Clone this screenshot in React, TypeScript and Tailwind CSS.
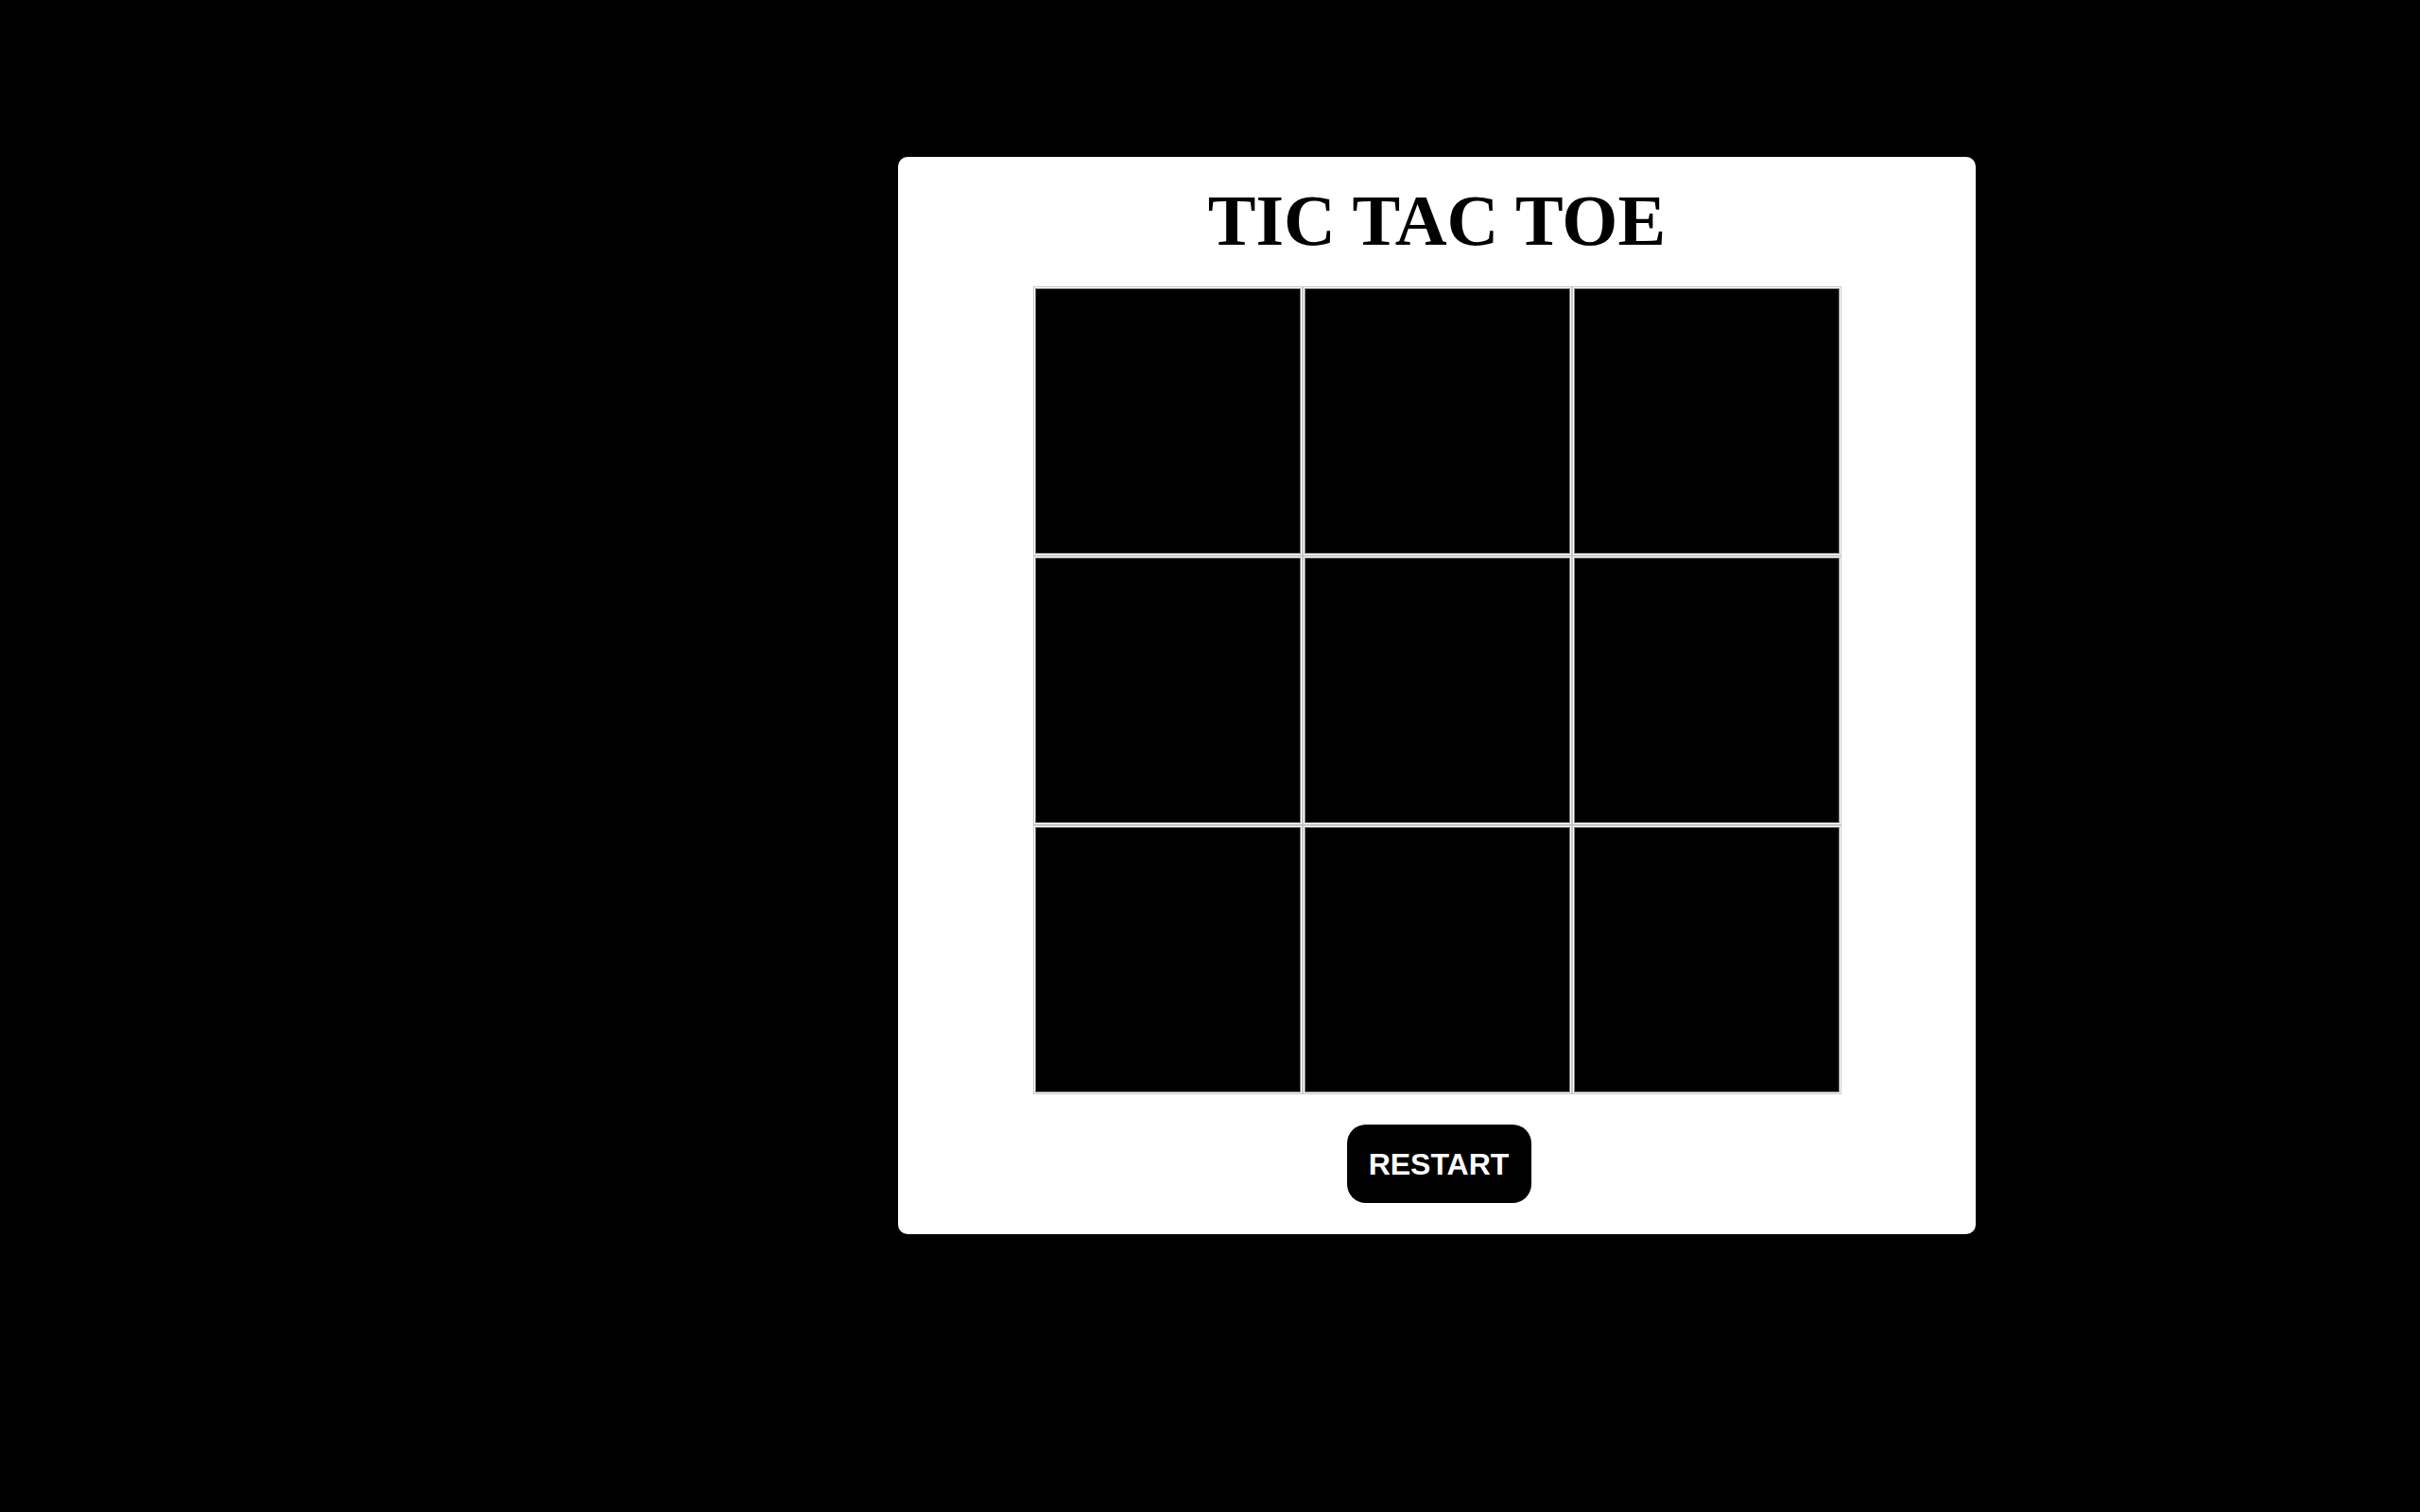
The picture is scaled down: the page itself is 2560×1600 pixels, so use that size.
import { useState } from "react";

export default function App() {
  const [board, setBoard] = useState<string[]>(Array(9).fill(""));

  return (
    <div className="min-h-[1600px] w-full bg-black pt-[166px] pl-[950px]">
      <div className="w-[1140px] h-[1140px] bg-white rounded-[10px] flex flex-col items-center">
        <h1 className="pt-[29px] text-[76px] leading-none font-bold text-black font-['Liberation_Serif','Times_New_Roman',serif]">
          TIC TAC TOE
        </h1>
        <div className="mt-[34px] grid grid-cols-[repeat(3,281px)] grid-rows-[repeat(3,281px)] gap-[4px]">
          {board.map((v, i) => (
            <button
              key={i}
              onClick={() => {
                const next = [...board];
                next[i] = "X";
                setBoard(next);
              }}
              className="bg-black border border-[#808080] outline outline-1 outline-offset-1 outline-[#c8c8c8] text-white text-7xl"
            >
              {v}
            </button>
          ))}
        </div>
        <button
          onClick={() => setBoard(Array(9).fill(""))}
          className="mt-[34px] ml-[4px] w-[195px] h-[83px] rounded-[20px] bg-black text-white text-[32px] font-bold font-['Liberation_Sans',Arial,sans-serif]"
        >
          RESTART
        </button>
      </div>
    </div>
  );
}
